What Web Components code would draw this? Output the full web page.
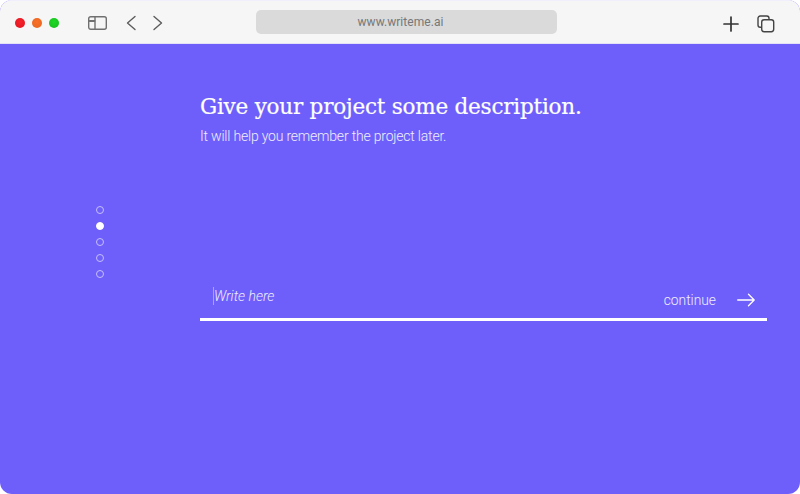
<!DOCTYPE html>
<html>
<head>
<meta charset="utf-8">
<title>writeme</title>
<style>
  html,body{margin:0;padding:0;background:#fff;}
  body{width:800px;height:494px;overflow:hidden;font-family:"Roboto",sans-serif;}
</style>
</head>
<body>
<browser-frame url="www.writeme.ai">
  <step-dots count="5" active="1"></step-dots>
  <description-form
    heading="Give your project some description."
    sub="It will help you remember the project later."
    placeholder="Write here"
    action="continue"></description-form>
</browser-frame>

<script>
class TrafficLights extends HTMLElement {
  constructor(){
    super();
    this.attachShadow({mode:'open'});
    this.shadowRoot.innerHTML = `
      <style>
        :host{display:flex;gap:7px;}
        i{display:block;width:10px;height:10px;border-radius:50%;}
        .r{background:radial-gradient(circle at 50% 40%,#f5232c,#e0141e);}
        .o{background:radial-gradient(circle at 50% 40%,#f8702a,#e8641e);}
        .g{background:radial-gradient(circle at 50% 40%,#1fd824,#15bb1d);}
      </style>
      <i class="r"></i><i class="o"></i><i class="g"></i>`;
  }
}
customElements.define('traffic-lights', TrafficLights);

class BrowserBar extends HTMLElement {
  constructor(){
    super();
    this.attachShadow({mode:'open'});
    this.shadowRoot.innerHTML = `
      <style>
        :host{display:flex;align-items:center;height:44px;box-sizing:border-box;background:#f6f6f6;
          border-top:1px solid #f1effc;border-bottom:1px solid #e4e1f7;padding:1px 0 0 15px;}
        svg{display:block;fill:none;stroke-linecap:round;stroke-linejoin:round;}
        #sidebar{margin-left:29px;}
        #back{margin-left:19px;}
        #forward{margin-left:17px;}
        #url{margin:0 0 2px 93px;width:301px;height:24px;box-sizing:border-box;padding-right:12px;border-radius:5px;background:#dadada;color:#777;
          display:flex;align-items:center;justify-content:center;font:400 12px "Roboto",sans-serif;letter-spacing:.05px;}
        #plus{margin:2px 0 0 166px;}
        #tabs{margin:2px 0 0 18px;}
      </style>
      <traffic-lights></traffic-lights>
      <svg id="sidebar" width="19" height="14" viewBox="0 0 19 14" stroke="#707070" stroke-width="1.4">
        <rect x=".7" y=".7" width="17.6" height="12.6" rx="2"/>
        <path d="M7 .7v12.600"/>
        <path d="M1.500 5h5" stroke-width="1.800"/>
      </svg>
      <svg id="back" width="10" height="16" viewBox="0 0 10 16" stroke="#5c5c5c" stroke-width="1.4"><path d="M9 1.500 1.500 8 9 14.500"/></svg>
      <svg id="forward" width="10" height="16" viewBox="0 0 10 16" stroke="#5c5c5c" stroke-width="1.4"><path d="M1 1.500 8.500 8 1 14.500"/></svg>
      <div id="url"><slot></slot></div>
      <svg id="plus" width="16" height="16" viewBox="0 0 16 16" stroke="#333" stroke-width="1.7"><path d="M8 1v14M1 8h14"/></svg>
      <svg id="tabs" width="18" height="18" viewBox="0 0 18 18" stroke="#444" stroke-width="1.4">
        <path d="M4 12.300H3.200A2.200 2.200 0 0 1 1 10.100V3.200A2.200 2.200 0 0 1 3.200 1h6.700a2.200 2.200 0 0 1 2.100 2.200V4"/>
        <rect x="4.700" y="4.700" width="12" height="12" rx="2.400"/>
      </svg>`;
  }
}
customElements.define('browser-bar', BrowserBar);

class BrowserFrame extends HTMLElement {
  constructor(){
    super();
    this.attachShadow({mode:'open'});
    this.shadowRoot.innerHTML = `
      <style>
        :host{display:flex;flex-direction:column;width:800px;height:494px;border-radius:12px;overflow:hidden;background:#6f5ffa;}
        main{flex:1;display:flex;align-items:flex-start;padding-left:96px;}
      </style>
      <browser-bar></browser-bar>
      <main><slot></slot></main>`;
    this.shadowRoot.querySelector('browser-bar').textContent = this.getAttribute('url');
  }
}
customElements.define('browser-frame', BrowserFrame);

class StepDots extends HTMLElement {
  constructor(){
    super();
    this.attachShadow({mode:'open'});
    const count = +this.getAttribute('count'), active = +this.getAttribute('active');
    let dots = '';
    for(let i=0;i<count;i++) dots += `<i class="${i==active?'on':''}"></i>`;
    this.shadowRoot.innerHTML = `
      <style>
        :host{display:flex;flex-direction:column;gap:8px;margin-top:162px;width:8px;}
        i{display:block;width:8px;height:8px;box-sizing:border-box;border-radius:50%;border:1px solid #c6bffc;}
        i.on{background:#fff;border-color:#fff;}
      </style>${dots}`;
  }
}
customElements.define('step-dots', StepDots);

class DescriptionForm extends HTMLElement {
  constructor(){
    super();
    this.attachShadow({mode:'open'});
    this.shadowRoot.innerHTML = `
      <style>
        :host{display:block;width:567px;margin-left:96px;color:#fff;}
        h1{margin:47px 0 0;font:400 21.500px/32px "DejaVu Serif",serif;letter-spacing:-.22px;white-space:nowrap;-webkit-text-stroke:.2px #fff;}
        p{margin:3px 0 0;font:300 14px/20px "Roboto",sans-serif;letter-spacing:-.2px;color:#f0eeff;}
        #row{display:flex;align-items:flex-end;justify-content:space-between;margin-top:126px;height:38px;
          border-bottom:3px solid #fff;padding-bottom:8px;box-sizing:content-box;}
        #field{margin-left:13px;margin-bottom:5px;border-left:1px solid #a99ffc;height:18px;
          font:italic 300 14px/18px "Roboto",sans-serif;color:#f0eeff;align-self:flex-end;}
        #go{display:flex;align-items:center;gap:21px;margin-right:12px;font:300 13.800px/20px "Roboto",sans-serif;color:#f0eeff;}
        svg{display:block;fill:none;stroke:#fff;stroke-width:1.300;stroke-linecap:round;stroke-linejoin:round;}
      </style>
      <h1></h1>
      <p></p>
      <div id="row">
        <div id="field"></div>
        <div id="go"><span></span>
          <svg width="18" height="14" viewBox="0 0 18 14"><path d="M.7 7h16.500M11.500 1.300 17.200 7l-5.700 5.700"/></svg>
        </div>
      </div>`;
    const r = this.shadowRoot;
    r.querySelector('h1').textContent = this.getAttribute('heading');
    r.querySelector('p').textContent = this.getAttribute('sub');
    r.querySelector('#field').textContent = this.getAttribute('placeholder');
    r.querySelector('#go span').textContent = this.getAttribute('action');
  }
}
customElements.define('description-form', DescriptionForm);
</script>
</body>
</html>
